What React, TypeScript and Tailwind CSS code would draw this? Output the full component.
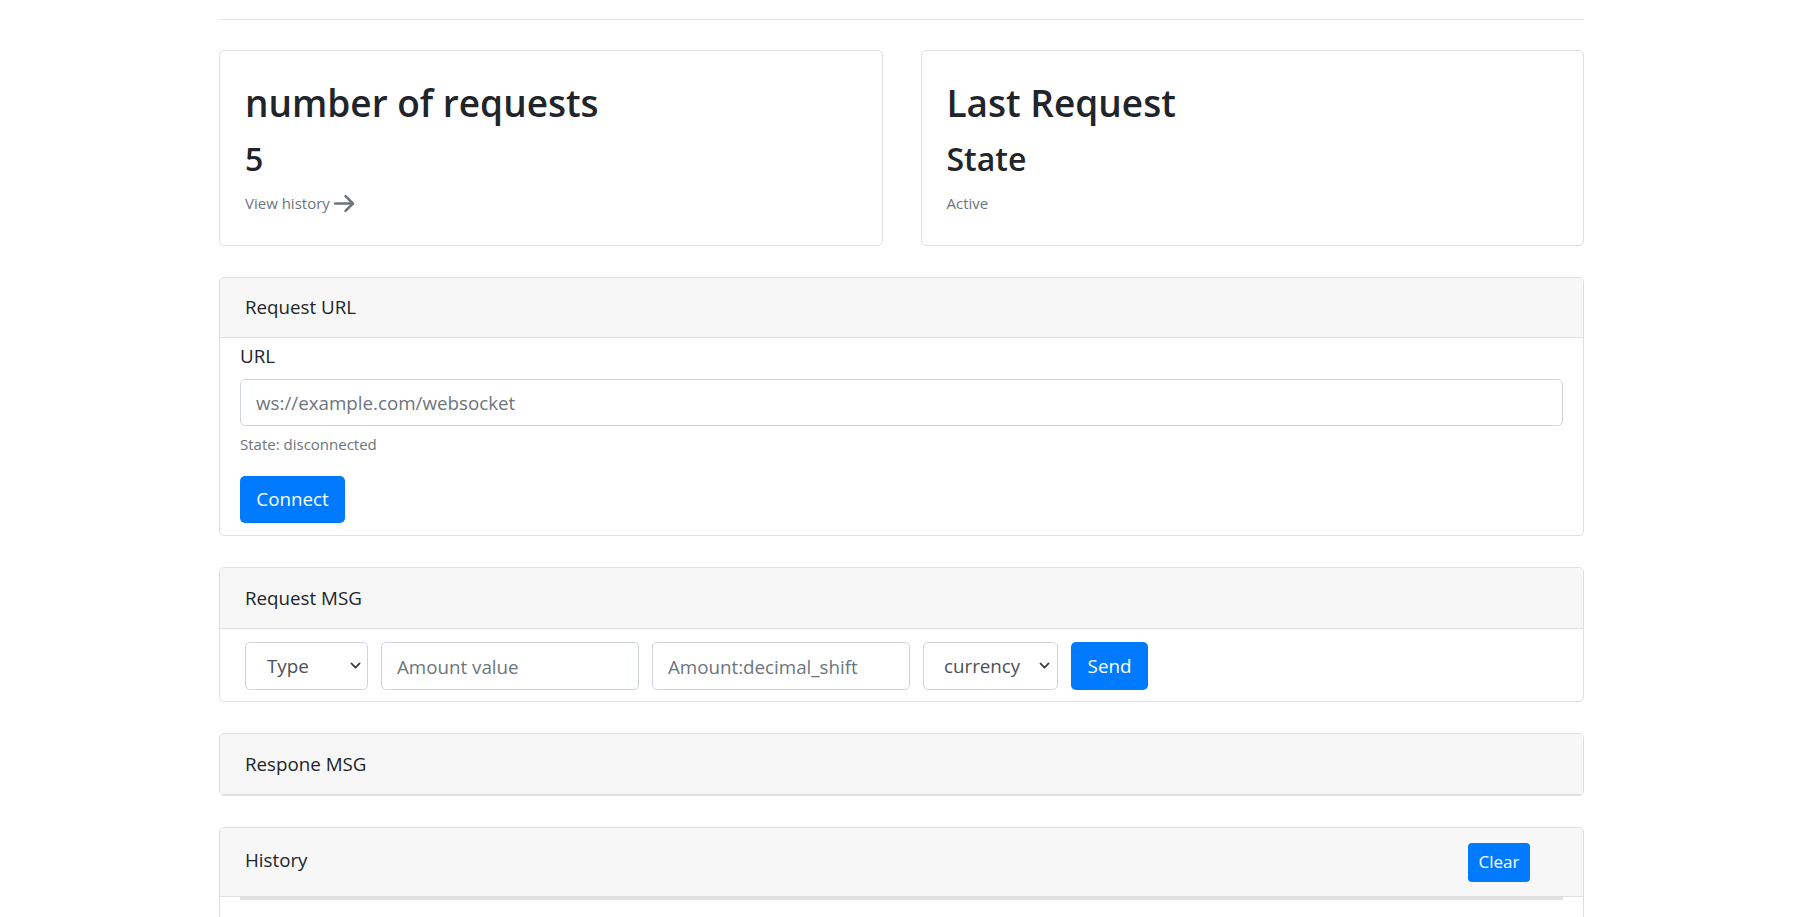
import React from 'react';

const ArrowRight = () => (
  <svg width="23" height="23" viewBox="0 0 22 22" fill="none" stroke="#6c757d" strokeWidth="2.4" strokeLinecap="round" strokeLinejoin="round">
    <path d="M2 11h17" />
    <path d="M12 4l7 7-7 7" />
  </svg>
);

const Chevron = () => (
  <svg width="11" height="11" viewBox="0 0 16 16" fill="none" stroke="#343a40" strokeWidth="2.4" strokeLinecap="round" strokeLinejoin="round">
    <path d="M2 5l6 6 6-6" />
  </svg>
);

const App: React.FC = () => {
  return (
    <div className="h-[917px] overflow-hidden bg-white font-['Open_Sans','Noto_Sans',sans-serif] text-[#212529]">
      <div className="ml-[219px] w-[1365px] pt-[19px]">
        <hr className="border-0 border-t border-[#e5e5e5]" />

        <div className="mt-[30px] flex flex-col gap-[31px]">
          {/* Stats */}
          <div className="grid grid-cols-2 gap-[38px]">
            <div className="rounded-[5px] border border-[#dfdfdf] px-[25px] pt-[29px] pb-[30px]">
              <h2 className="text-[37px] leading-[46px] font-semibold">number of requests</h2>
              <h3 className="mt-[13px] text-[32px] leading-[40px] font-semibold">5</h3>
              <a href="#history" className="mt-[12px] flex items-center gap-[3px] text-[15px] leading-[24px] text-[#6c757d]">
                View history <ArrowRight />
              </a>
            </div>
            <div className="rounded-[5px] border border-[#dfdfdf] px-[25px] pt-[29px] pb-[30px]">
              <h2 className="text-[37px] leading-[46px] font-semibold">Last Request</h2>
              <h3 className="mt-[13px] text-[32px] leading-[40px] font-semibold">State</h3>
              <p className="mt-[12px] text-[15px] leading-[24px] text-[#6c757d]">Active</p>
            </div>
          </div>

          {/* Request URL */}
          <div className="overflow-hidden rounded-[5px] border border-[#dfdfdf]">
            <div className="flex h-[60px] items-center border-b border-[#dfdfdf] bg-[#f7f7f7] px-[25px] text-[18.75px]">
              Request URL
            </div>
            <div className="px-5 pt-[4px] pb-[12px]">
              <label className="block text-[18.75px] leading-[28px]">URL</label>
              <input
                placeholder="ws://example.com/websocket"
                className="mt-[9px] block h-[47px] w-full rounded-[5px] border border-[#ced4da] px-[15px] text-[18.75px] placeholder:text-[#6c757d] outline-none"
              />
              <p className="mt-[6px] text-[15px] leading-[24px] text-[#6c757d]">State: disconnected</p>
              <button className="mt-[20px] h-[47px] w-[105px] rounded-[5px] bg-[#007bff] text-[18.75px] text-white">
                Connect
              </button>
            </div>
          </div>

          {/* Request MSG */}
          <div className="overflow-hidden rounded-[5px] border border-[#dfdfdf]">
            <div className="flex h-[61px] items-center border-b border-[#dfdfdf] bg-[#f7f7f7] px-[25px] text-[18.75px]">
              Request MSG
            </div>
            <div className="flex gap-[13px] px-[25px] pt-[13px] pb-[11px]">
              <div className="relative flex h-[48px] w-[123px] items-center rounded-[5px] border border-[#ced4da] pl-[21px] text-[18.75px] text-[#495057]">
                Type
                <span className="absolute right-[6px] top-[17px]"><Chevron /></span>
              </div>
              <input
                placeholder="Amount value"
                className="h-[48px] w-[258px] rounded-[5px] border border-[#ced4da] px-[15px] text-[18.75px] placeholder:text-[#6c757d] outline-none"
              />
              <input
                placeholder="Amount:decimal_shift"
                className="h-[48px] w-[258px] rounded-[5px] border border-[#ced4da] px-[15px] text-[18.75px] placeholder:text-[#6c757d] outline-none"
              />
              <div className="relative flex h-[48px] w-[135px] items-center rounded-[5px] border border-[#ced4da] pl-[20px] text-[18.75px] text-[#495057]">
                currency
                <span className="absolute right-[7px] top-[17px]"><Chevron /></span>
              </div>
              <button className="h-[48px] w-[77px] rounded-[5px] bg-[#007bff] text-[18.75px] text-white">Send</button>
            </div>
          </div>

          {/* Response */}
          <div className="overflow-hidden rounded-[5px] border border-[#dfdfdf]">
            <div className="flex h-[61px] items-center border-b border-[#dfdfdf] bg-[#f7f7f7] px-[25px] text-[18.75px]">
              Respone MSG
            </div>
          </div>

          {/* History */}
          <div id="history" className="overflow-hidden rounded-[5px] border border-[#dfdfdf]">
            <div className="flex h-[69px] items-center justify-between border-b border-[#dfdfdf] bg-[#f7f7f7] pl-[25px] pr-[53px] text-[18.75px]">
              <span className="pb-[4px]">History</span>
              <button className="h-[39px] w-[62px] rounded-[4px] bg-[#007bff] text-[17px] text-white">Clear</button>
            </div>
            <div className="h-[120px] px-5">
              <div className="border-t-[3px] border-[#dee2e6]" />
            </div>
          </div>
        </div>
      </div>
    </div>
  );
};

export default App;
